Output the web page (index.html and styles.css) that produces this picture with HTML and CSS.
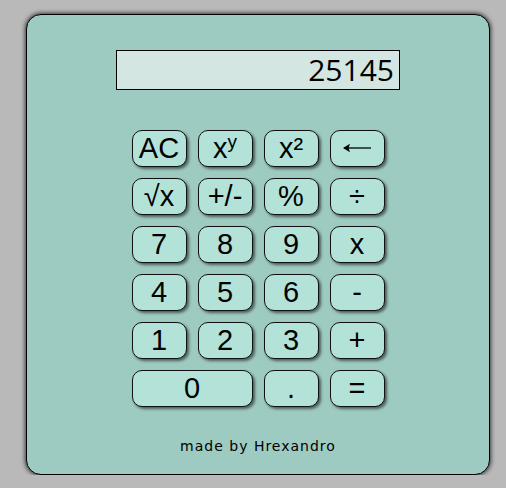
FILE: index.html
```html
<!DOCTYPE html>
<html>
<head>
<meta charset="utf-8">
<link rel="stylesheet" href="styles.css">
</head>
<body>
<div class="calc">
  <div class="display">25145</div>
  <div class="keys">
    <button class="key">AC</button>
    <button class="key">x<sup class="sup">y</sup></button>
    <button class="key">x²</button>
    <button class="key" aria-label="backspace"><svg class="arrow" width="30" height="12" viewBox="0 0 30 12"><path d="M2 6 H29" stroke="#000" stroke-width="1.3" fill="none"/><path d="M1 6 L8 1.8 L6.5 6 L8 10.2 Z" fill="#000"/></svg></button>
    <button class="key">√x</button>
    <button class="key">+/-</button>
    <button class="key">%</button>
    <button class="key">÷</button>
    <button class="key">7</button>
    <button class="key">8</button>
    <button class="key">9</button>
    <button class="key">x</button>
    <button class="key">4</button>
    <button class="key">5</button>
    <button class="key">6</button>
    <button class="key">-</button>
    <button class="key">1</button>
    <button class="key">2</button>
    <button class="key">3</button>
    <button class="key">+</button>
    <button class="key wide">0</button>
    <button class="key">.</button>
    <button class="key">=</button>
  </div>
  <div class="credit">made by Hrexandro</div>
</div>
</body>
</html>
```

FILE: styles.css
```css
html, body {
  margin: 0;
  padding: 0;
  background: #b9b9b9;
}
body {
  padding: 14px 0 0 26px;
}
.calc {
  box-sizing: border-box;
  width: 464px;
  height: 461px;
  background: #9ecbc1;
  border: 1.5px solid #000;
  border-radius: 15px;
  box-shadow: 0 0 4px 1px rgba(0,0,0,0.7);
  display: flex;
  flex-direction: column;
  align-items: center;
  padding-top: 34.5px;
}
.display {
  box-sizing: border-box;
  width: 284px;
  height: 40px;
  border: 1px solid #000;
  background: #d3e6e1;
  font-family: "Open Sans", sans-serif;
  font-size: 30px;
  line-height: 38px;
  text-align: right;
  padding-right: 5px;
  color: #000;
}
.keys {
  margin-top: 40px;
  display: grid;
  grid-template-columns: repeat(4, 55px);
  grid-auto-rows: 37px;
  column-gap: 11px;
  row-gap: 11px;
}
.key {
  box-sizing: border-box;
  margin: 0;
  padding: 0;
  border: 1px solid #111;
  border-radius: 10px;
  background: #b3e3d8;
  box-shadow: 2px 2px 3px rgba(0,0,0,0.55);
  font-family: "Liberation Sans", Arial, sans-serif;
  font-size: 29px;
  line-height: 35px;
  color: #000;
  text-align: center;
}
.wide {
  grid-column: span 2;
}
.sup {
  font-size: 19px;
  vertical-align: 10px;
  line-height: 0;
}
.arrow {
  display: inline-block;
  vertical-align: middle;
  position: relative;
  top: -2px;
}
.credit {
  margin-top: 31px;
  font-family: "DejaVu Sans", sans-serif;
  font-size: 14px;
  letter-spacing: 1px;
  color: #000;
}
```
